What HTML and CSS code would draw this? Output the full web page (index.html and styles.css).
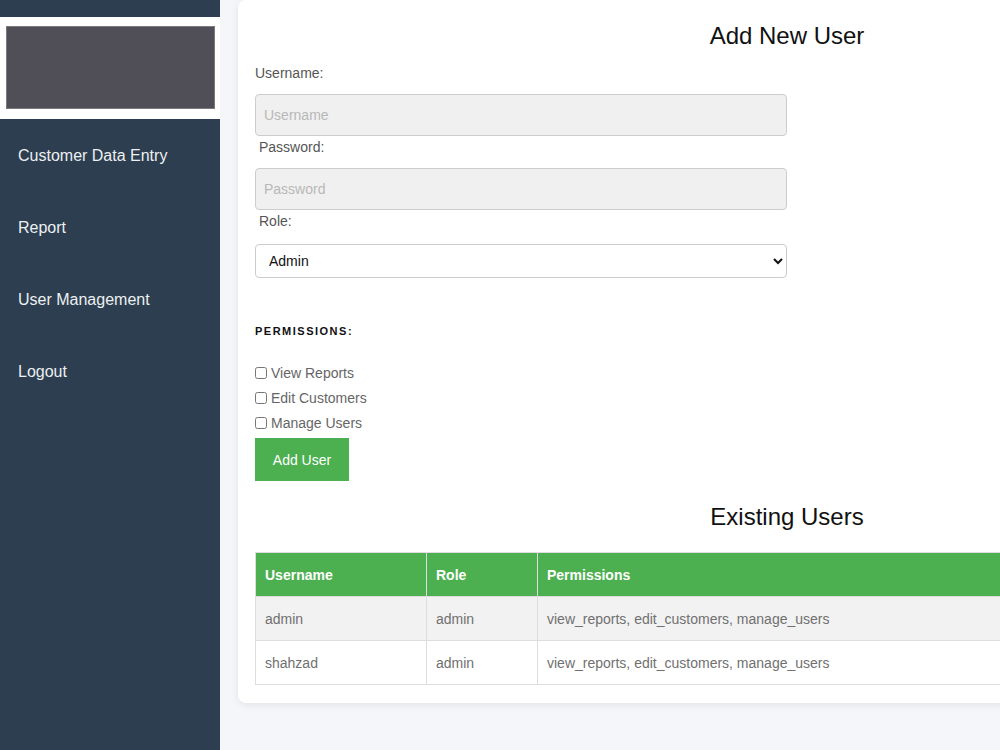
FILE: index.html
```html
<!DOCTYPE html>
<html>
<head>
<meta charset="utf-8">
<link rel="stylesheet" href="styles.css">
</head>
<body>
<div class="layout">
  <aside class="sidebar">
    <div class="logo-band"><div class="logo-box"></div></div>
    <nav class="nav">
      <a class="nav-link">Customer Data Entry</a>
      <a class="nav-link">Report</a>
      <a class="nav-link">User Management</a>
      <a class="nav-link">Logout</a>
    </nav>
  </aside>
  <main class="main">
    <div class="card">
      <h2 class="title">Add New User</h2>
      <form class="form">
        <label class="label">Username:</label>
        <input class="field" type="text" placeholder="Username">
        <label class="label label-indent">Password:</label>
        <input class="field" type="password" placeholder="Password">
        <label class="label label-indent label-role">Role:</label>
        <select class="select">
          <option>Admin</option>
        </select>
        <div class="perm-title">PERMISSIONS:</div>
        <div class="checks">
          <label class="check"><input type="checkbox" class="cb"> View Reports</label>
          <label class="check"><input type="checkbox" class="cb"> Edit Customers</label>
          <label class="check"><input type="checkbox" class="cb"> Manage Users</label>
        </div>
        <button type="button" class="btn">Add User</button>
      </form>
      <h2 class="title title-2">Existing Users</h2>
      <table class="table">
        <thead>
          <tr><th class="c1">Username</th><th class="c2">Role</th><th>Permissions</th></tr>
        </thead>
        <tbody>
          <tr class="odd"><td>admin</td><td>admin</td><td>view_reports, edit_customers, manage_users</td></tr>
          <tr><td>shahzad</td><td>admin</td><td>view_reports, edit_customers, manage_users</td></tr>
        </tbody>
      </table>
    </div>
  </main>
</div>
</body>
</html>
```
FILE: styles.css
```css
html, body {
  margin: 0;
  padding: 0;
  height: 100%;
  overflow: hidden;
}
body {
  font-family: "Liberation Sans", Arial, sans-serif;
  background: #f5f6fa;
}
.layout {
  display: flex;
  height: 750px;
  width: 1000px;
  overflow: hidden;
}
.sidebar {
  flex: 0 0 220px;
  width: 220px;
  background: #2c3e50;
  padding-top: 17px;
  box-sizing: border-box;
}
.logo-band {
  background: #ffffff;
  padding: 9px 5px 10px 6px;
}
.logo-box {
  height: 81px;
  background: #504f57;
  border: 1px solid #7a7980;
}
.nav {
  display: flex;
  flex-direction: column;
}
.nav-link {
  display: block;
  padding: 28px 18px 26px 18px;
  font-size: 16px;
  line-height: 18px;
  color: #ecf0f1;
  text-decoration: none;
}
.main {
  flex: 0 0 auto;
  padding-left: 18px;
}
.card {
  width: 1064px;
  background: #ffffff;
  border-radius: 8px;
  box-shadow: 0 2px 8px rgba(0, 0, 0, 0.08);
  padding: 17px 17px 18px 17px;
}
.title {
  margin: 5px 0 0 0;
  text-align: center;
  font-size: 24px;
  line-height: 28px;
  font-weight: normal;
  color: #111;
}
.form {
  display: flex;
  flex-direction: column;
  align-items: flex-start;
  padding-top: 15px;
}
.label {
  display: block;
  font-size: 14px;
  line-height: 16px;
  color: #555;
  margin-bottom: 13px;
}
.label-indent {
  padding-left: 4px;
}
.label-role {
  margin-bottom: 15px;
}
.field {
  box-sizing: border-box;
  width: 532px;
  height: 42px;
  background: #f0f0f0;
  border: 1px solid #cccccc;
  border-radius: 4px;
  padding: 0 8px;
  font-family: "Liberation Sans", Arial, sans-serif;
  font-size: 14px;
  margin: 0 0 3px 0;
}
.field::placeholder {
  color: #b8b8b8;
}
.select {
  box-sizing: border-box;
  width: 532px;
  height: 34px;
  background: #ffffff;
  border: 1px solid #cccccc;
  border-radius: 4px;
  padding: 0 9px;
  font-family: "Liberation Sans", Arial, sans-serif;
  font-size: 14px;
  color: #111;
  margin: 0;
}
.perm-title {
  margin-top: 46px;
  font-size: 11px;
  line-height: 14px;
  font-weight: bold;
  letter-spacing: 1.5px;
  color: #111;
}
.checks {
  margin-top: 22px;
  display: flex;
  flex-direction: column;
}
.check {
  display: flex;
  align-items: center;
  height: 25px;
  font-size: 14px;
  color: #666;
}
.cb {
  width: 12px;
  height: 12px;
  margin: 0 4px 0 0;
}
.btn {
  margin-top: 3px;
  width: 94px;
  height: 43px;
  background: #4caf50;
  border: none;
  color: #ffffff;
  font-family: "Liberation Sans", Arial, sans-serif;
  font-size: 14px;
}
.title-2 {
  margin-top: 22px;
}
.table {
  margin-top: 21px;
  width: 100%;
  border-collapse: collapse;
  font-size: 14px;
}
.table th, .table td {
  border: 1px solid #dddddd;
  height: 44px;
  padding: 0 9px;
  text-align: left;
  box-sizing: border-box;
}
.table th {
  background: #4caf50;
  color: #ffffff;
  font-weight: bold;
}
.table td {
  color: #707070;
}
.table .c1 {
  width: 171px;
}
.table .c2 {
  width: 111px;
}
.odd {
  background: #f2f2f2;
}
```
